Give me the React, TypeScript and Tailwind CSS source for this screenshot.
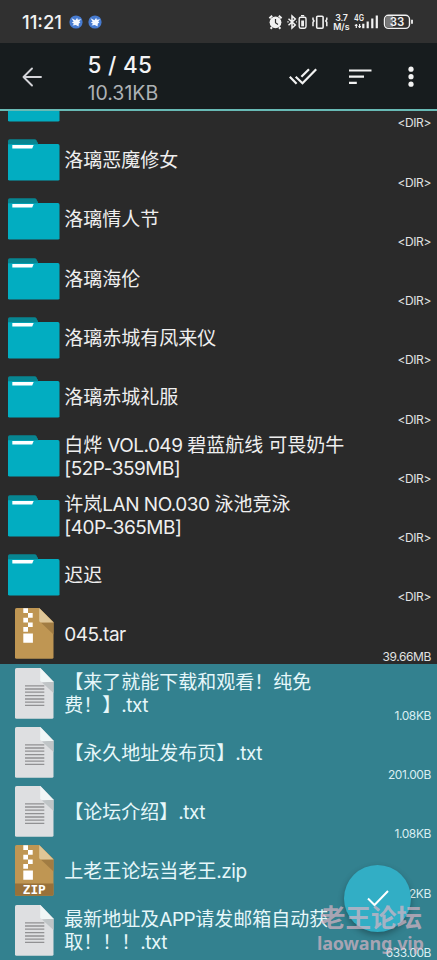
// src/components/files/FileSelectionScreen.tsx
import React from 'react';

type FileKind = 'folder' | 'archive' | 'zip' | 'text';

interface FileItem {
  id: number;
  kind: FileKind;
  lines: string[];
  size: string;
  selected?: boolean;
}

const FILES: FileItem[] = [
  { id: 1, kind: 'folder', lines: [], size: '<DIR>' },
  { id: 2, kind: 'folder', lines: ['洛璃恶魔修女'], size: '<DIR>' },
  { id: 3, kind: 'folder', lines: ['洛璃情人节'], size: '<DIR>' },
  { id: 4, kind: 'folder', lines: ['洛璃海伦'], size: '<DIR>' },
  { id: 5, kind: 'folder', lines: ['洛璃赤城有凤来仪'], size: '<DIR>' },
  { id: 6, kind: 'folder', lines: ['洛璃赤城礼服'], size: '<DIR>' },
  { id: 7, kind: 'folder', lines: ['白烨 VOL.049 碧蓝航线 可畏奶牛', '[52P-359MB]'], size: '<DIR>' },
  { id: 8, kind: 'folder', lines: ['许岚LAN NO.030 泳池竞泳', '[40P-365MB]'], size: '<DIR>' },
  { id: 9, kind: 'folder', lines: ['迟迟'], size: '<DIR>' },
  { id: 10, kind: 'archive', lines: ['045.tar'], size: '39.66MB' },
  { id: 11, kind: 'text', lines: ['【来了就能下载和观看！纯免', '费！】.txt'], size: '1.08KB', selected: true },
  { id: 12, kind: 'text', lines: ['【永久地址发布页】.txt'], size: '201.00B', selected: true },
  { id: 13, kind: 'text', lines: ['【论坛介绍】.txt'], size: '1.08KB', selected: true },
  { id: 14, kind: 'zip', lines: ['上老王论坛当老王.zip'], size: '7.12KB', selected: true },
  { id: 15, kind: 'text', lines: ['最新地址及APP请发邮箱自动获', '取！！！.txt'], size: '633.00B', selected: true },
];

const FolderIcon = () => (
  <svg width="52" height="42" viewBox="0 0 52 42">
    <path d="M0 2Q0 .3 1.7 .3H26.5Q28 .3 28.6 1.6L30.5 6H0Z" fill="#078591" />
    <path d="M0 5H49.8Q51.5 5 51.5 6.7V40.2Q51.5 41.6 50 41.6H1.5Q0 41.6 0 40.2Z" fill="#02adc1" />
    <path d="M0 3H29.3L30.2 5.2H0Z" fill="#078591" />
    <path d="M4.3 6H25.7L24.2 9.6H4.3Z" fill="#fff" />
  </svg>
);

const TextIcon = () => (
  <svg width="39" height="51" viewBox="0 0 39 51">
    <path d="M1.6 0H25.5L38.5 13.5V49.3Q38.5 50.8 37 50.8H1.6Q0 50.8 0 49.3V1.6Q0 0 1.6 0Z" fill="#dedfe1" />
    <path d="M27 14.5L38.5 25V13.5Z" fill="#bfc4c6" />
    <path d="M25.2 0L38.5 14H27Q25.2 14 25.2 12.2Z" fill="#f0f6f6" />
    <path
      d="M10 17.8H29.3M10 21H29.3M10 24.2H29.3M10 27.6H29.3M10 31H29.3M10 34.2H29.3M10 37.4H29.3"
      stroke="#919193"
      strokeWidth="1.3"
    />
  </svg>
);

const ArchiveIcon = ({ label }: { label?: string }) => (
  <svg width="39" height="51" viewBox="0 0 39 51">
    <path d="M1.6 0H24.2L38.5 14V49.3Q38.5 50.8 37 50.8H1.6Q0 50.8 0 49.3V1.6Q0 0 1.6 0Z" fill="#bf9653" />
    <path d="M25.8 14.5L38.5 26.5V14Z" fill="#a17c42" />
    <path d="M24.2 0L38.5 14.5H26Q24.2 14.5 24.2 12.7Z" fill="#dfc697" />
    {/* 拉链 */}
    <path
      d="M8.3 .3H13V5H8.3ZM13 5H17.7V9.7H13ZM8.3 9.7H13V14.4H8.3ZM13 14.4H17.7V19.1H13ZM8.3 19.1H13V23.8H8.3ZM8.3 25.6H17.9V34.8H8.3Z"
      fill="#fff"
    />
    {label && (
      <>
        <path d="M0 38.6H38.5V49.3Q38.5 50.8 37 50.8H1.6Q0 50.8 0 49.3Z" fill="#98713a" />
        <text
          x="19.3"
          y="49"
          textAnchor="middle"
          textLength="23"
          lengthAdjust="spacingAndGlyphs"
          fontFamily="DejaVu Sans Mono, monospace"
          fontWeight="700"
          fontSize="12"
          fill="#fff"
        >
          {label}
        </text>
      </>
    )}
  </svg>
);

const FileIcon = ({ kind }: { kind: FileKind }) => {
  if (kind === 'folder') return <FolderIcon />;
  if (kind === 'text') return <TextIcon />;
  return <ArchiveIcon label={kind === 'zip' ? 'ZIP' : undefined} />;
};

// 西文部分收紧字距，中文保持全角
const FileName = ({ text }: { text: string }) => (
  <span>
    {text.split(/([\x20-\x7e]+)/).map((part, index) =>
      index % 2 === 1 ? (
        <span key={index} className="tracking-[-0.5px]">
          {part}
        </span>
      ) : (
        part
      )
    )}
  </span>
);

const FileRow = ({ file }: { file: FileItem }) => (
  <div className={`flex h-[59.25px] pl-2 pr-[6px] ${file.selected ? 'bg-[#33818f]' : ''}`}>
    <div
      className={`flex w-[56.3px] shrink-0 items-start ${
        file.kind === 'folder' ? 'pt-[8.8px]' : 'pl-[6.5px] pt-[4.2px]'
      }`}
    >
      <FileIcon kind={file.kind} />
    </div>
    <div
      className={`flex flex-1 flex-col justify-center whitespace-pre pt-[3px] text-[19px] leading-[22.5px] [text-spacing-trim:space-all] ${
        file.selected ? 'text-[#e6f7fa]' : 'text-[#efefef]'
      }`}
    >
      {file.lines.map((line) => (
        <FileName key={line} text={line} />
      ))}
    </div>
    <span
      className={`self-end whitespace-nowrap text-[12px] leading-[15px] tracking-[-0.4px] ${
        file.selected ? 'text-[#d9eef2]' : 'text-[#e2e2e2]'
      }`}
    >
      {file.size}
    </span>
  </div>
);

const BirdBadge = () => (
  <svg width="14" height="14" viewBox="0 0 14 14">
    <circle cx="7" cy="7" r="6.6" fill="#477bd0" />
    <path d="M2.6 3.2L6.4 5.2L8.2 2.8L8.8 4.8L12.2 4.2L10.2 6.6L11.4 7.4L9.8 8.4L9.6 11.6L6.8 10L3.4 10.4L5 8.7L2.8 7.4L4.6 6.8Z" fill="#f3f8ff" />
  </svg>
);

const StatusBar = () => (
  <div className="flex h-[43px] items-center bg-[#303030] pl-[22px] text-[#f2f2f2]">
    <span className="w-[46.5px] pt-[2px] text-[18.5px] font-medium leading-none">11:21</span>
    <div className="flex gap-[5px]">
      <BirdBadge />
      <BirdBadge />
    </div>
    <svg className="ml-auto mr-[19px] shrink-0" width="150" height="24" viewBox="268 10 150 24" fill="none" stroke="#f2f2f2">
      {/* 闹钟 */}
      <circle cx="275.5" cy="22.3" r="5.9" fill="#f2f2f2" stroke="none" />
      <path d="M269.4 18.2L272.2 15.8M281.6 18.2L278.8 15.8M272 27.3L270.6 28.8M279 27.3L280.4 28.8" strokeWidth="2" />
      <path d="M275.5 19V22.8L278 24.5" stroke="#303030" strokeWidth="1.2" />
      {/* 蓝牙与设备电量 */}
      <path d="M288.5 18.8L295.3 25L292 28V16L295.3 19L288.5 25.2" strokeWidth="1.5" />
      <path d="M296.2 21.9h.8M287.3 21.9h1.4" strokeWidth="1.4" />
      <rect x="299.2" y="17.2" width="6.8" height="11" rx="1.6" strokeWidth="1.4" />
      <path d="M301 15.7H304.2" strokeWidth="1.4" />
      <rect x="301.2" y="20.5" width="2.8" height="5.8" fill="#f2f2f2" stroke="none" />
      {/* 振动 */}
      <rect x="316.7" y="16.2" width="6.4" height="12" rx="1" strokeWidth="1.6" />
      <path d="M313 17.5V19.5L314 21L313 22.3V26.3M326.8 17.5V19.5L325.8 21L326.8 22.3V26.3" strokeWidth="1.5" />
      <g fill="#f2f2f2" stroke="none" fontFamily="Inter, sans-serif" fontWeight="600">
        <text x="341.6" y="20.7" fontSize="8.8" textAnchor="middle" textLength="12.5">3.7</text>
        <text x="341.4" y="29.6" fontSize="8.8" textAnchor="middle" textLength="16.5">M/s</text>
        <text x="354" y="21.4" fontSize="8.4" textLength="10" lengthAdjust="spacingAndGlyphs">4G</text>
      </g>
      {/* 信号 */}
      <path d="M356.3 24V28M354.8 25.3H357.5M359.6 24V28M358.3 26.7H361" strokeWidth="1.2" />
      <path d="M363.3 23.7V28.2M367.7 21.4V28.2M372.3 18.4V28.2M376.8 15.6V28.2" strokeWidth="2.2" />
      {/* 电池 */}
      <rect x="384.5" y="15.2" width="25" height="13.2" rx="4" strokeWidth="1.4" />
      <path d="M388.4 16H393V27.6H388.4Q385.4 27.6 385.4 24.6V19Q385.4 16 388.4 16Z" fill="#777" stroke="none" />
      <path d="M412 19.8V23.8" strokeWidth="1.8" />
      <text x="397" y="26.2" fontSize="12" fontWeight="600" textAnchor="middle" textLength="14.5" lengthAdjust="spacingAndGlyphs" fill="#f2f2f2" stroke="none" fontFamily="Inter, sans-serif">
        33
      </text>
    </svg>
  </div>
);

const SelectionHeader = () => (
  <header className="flex h-[67.5px] items-center border-b-[2.5px] border-[#68bab5] bg-[#171c1e] pl-[22px] pr-[22.5px] pt-[2px]">
    <svg width="20" height="20" viewBox="0 0 20 20" fill="none" stroke="#d4d4d8" strokeWidth="1.9" strokeLinecap="round" strokeLinejoin="round">
      <path d="M19 10H1.5M10 1.5L1.5 10L10 18.5" />
    </svg>
    <div className="ml-[45.5px] flex flex-col pt-[5px]">
      <span className="text-[22.5px] font-medium leading-[29px] tracking-[0.3px] text-[#f3f3f5]">5 / 45</span>
      <span className="text-[19.5px] leading-[29px] text-[#aeb2b5]">10.31KB</span>
    </div>
    <div className="ml-auto flex items-center">
      <svg width="28" height="17" viewBox="0 0 28 17" fill="none" stroke="#f2f2f2" strokeWidth="2.2">
        <path d="M.8 8.8L7.6 15.8M6.7 8.8L13.5 15.2L27.2 1.2M12.4 8.8L20 1.2" />
      </svg>
      <svg className="ml-[32px]" width="23" height="16" viewBox="0 0 23 16" fill="none" stroke="#f2f2f2" strokeWidth="2.2">
        <path d="M0 1.5H22.5M0 7.7H15M0 13.9H7.8" />
      </svg>
      <svg className="ml-[35px]" width="8" height="21" viewBox="0 0 8 21" fill="#f2f2f2">
        <circle cx="4" cy="3.2" r="2.6" />
        <circle cx="4" cy="10.7" r="2.6" />
        <circle cx="4" cy="18.2" r="2.6" />
      </svg>
    </div>
  </header>
);

const App: React.FC = () => {
  return (
    <div className="relative flex h-[960px] w-[437px] flex-col overflow-hidden bg-[#2a2a2a] font-['Inter','Noto_Sans_CJK_SC',sans-serif]">
      <StatusBar />
      <SelectionHeader />

      {/* 列表已滚动，首行只露出底部 */}
      <main className="min-h-0 flex-1 overflow-hidden">
        <div className="-mt-[39.5px]">
          {FILES.map((file) => (
            <FileRow key={file.id} file={file} />
          ))}
        </div>
      </main>

      {/* 确认按钮 */}
      <button className="absolute left-[344px] top-[865px] flex size-[67px] items-center justify-center rounded-full bg-[#32aec5] shadow-[0_3px_6px_rgba(0,0,0,0.3)]">
        <svg width="22" height="17" viewBox="0 0 22 17" fill="none" stroke="#fff" strokeWidth="2">
          <path d="M1 8.5L7.5 15L21 1" />
        </svg>
      </button>

      {/* 水印 */}
      <div className="pointer-events-none absolute left-[317px] top-[903px] flex flex-col font-bold text-[#dcb4c4]/70">
        <span className="pl-[3px] text-[25.5px] leading-[30px]">老王论坛</span>
        <span className="font-['Noto_Sans',sans-serif] text-[18px] leading-[20px] tracking-[-0.15px]">laowang.vip</span>
      </div>
    </div>
  );
};

export default App;
